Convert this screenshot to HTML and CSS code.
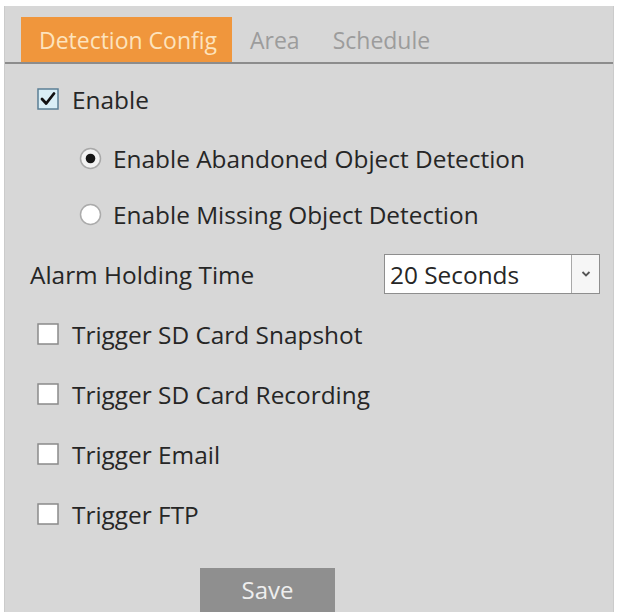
FILE: index.html
```html
<!DOCTYPE html>
<html lang="en">
<head>
<meta charset="utf-8">
<title>Detection Config</title>
<link rel="stylesheet" href="styles.css">
</head>
<body>
<div class="panel">
  <div class="tabs">
    <div class="tab active">Detection Config</div>
    <div class="tab">Area</div>
    <div class="tab">Schedule</div>
  </div>
  <div class="form">
    <div class="row check-row">
      <svg class="box" width="22" height="22" viewBox="0 0 22 22"><rect x="1" y="1" width="20" height="20" fill="#d9eef6" stroke="#5b7f95" stroke-width="1.5"/><path d="M5 11 L9.2 15.5 L17 5.5" fill="none" stroke="#111" stroke-width="2.8" stroke-linecap="round" stroke-linejoin="round"/></svg>
      <span>Enable</span>
    </div>
    <div class="row radio-row">
      <svg class="radio" width="23" height="23" viewBox="0 0 23 23"><circle cx="11.5" cy="11.5" r="10" fill="#f2f2f2" stroke="#a8a8a8" stroke-width="1.5"/><circle cx="11.5" cy="11.5" r="4.8" fill="#161616"/></svg>
      <span>Enable Abandoned Object Detection</span>
    </div>
    <div class="row radio-row tight">
      <svg class="radio" width="23" height="23" viewBox="0 0 23 23"><circle cx="11.5" cy="11.5" r="10" fill="#ffffff" stroke="#ababab" stroke-width="1.5"/></svg>
      <span>Enable Missing Object Detection</span>
    </div>
    <div class="row field-row">
      <span class="label">Alarm Holding Time</span>
      <div class="select">
        <span class="value">20 Seconds</span>
        <span class="drop"><svg width="10" height="8" viewBox="0 0 10 8"><path d="M1.5 2 L5 5.5 L8.5 2" fill="none" stroke="#555" stroke-width="1.8"/></svg></span>
      </div>
    </div>
    <div class="row check-row trig">
      <svg class="box" width="22" height="22" viewBox="0 0 22 22"><rect x="1" y="1" width="20" height="20" fill="#ffffff" stroke="#8a8a8a" stroke-width="1.5"/></svg>
      <span>Trigger SD Card Snapshot</span>
    </div>
    <div class="row check-row trig">
      <svg class="box" width="22" height="22" viewBox="0 0 22 22"><rect x="1" y="1" width="20" height="20" fill="#ffffff" stroke="#8a8a8a" stroke-width="1.5"/></svg>
      <span>Trigger SD Card Recording</span>
    </div>
    <div class="row check-row trig">
      <svg class="box" width="22" height="22" viewBox="0 0 22 22"><rect x="1" y="1" width="20" height="20" fill="#ffffff" stroke="#8a8a8a" stroke-width="1.5"/></svg>
      <span>Trigger Email</span>
    </div>
    <div class="row check-row trig">
      <svg class="box" width="22" height="22" viewBox="0 0 22 22"><rect x="1" y="1" width="20" height="20" fill="#ffffff" stroke="#8a8a8a" stroke-width="1.5"/></svg>
      <span>Trigger FTP</span>
    </div>
    <div class="actions">
      <button class="save" type="button">Save</button>
    </div>
  </div>
</div>
</body>
</html>
```
FILE: styles.css
```css
html, body {
  margin: 0;
  padding: 0;
  background: #ffffff;
}
body {
  font-family: "Open Sans", "Noto Sans", "Liberation Sans", sans-serif;
  color: #262626;
}
.panel {
  margin: 6px 4px 0 4px;
  width: 610px;
  height: 606px;
  background: #d7d7d7;
  box-sizing: border-box;
  border-left: 1px solid #cbcbcb;
  border-right: 1px solid #cbcbcb;
  overflow: hidden;
}
.tabs {
  display: flex;
  padding: 11px 0 0 16px;
  border-bottom: 2px solid #8c8c8c;
}
.tab {
  height: 45px;
  display: flex;
  align-items: center;
  padding: 0 15px 0 18px;
  font-size: 23px;
  color: #9c9c9c;
}
.tab.active {
  width: 211px;
  box-sizing: border-box;
  justify-content: center;
  padding: 0 0 0 3px;
  background: #f0963c;
  color: #fde3bd;
}
.form {
  display: flex;
  flex-direction: column;
  gap: 19px;
  padding: 15px 0 0 25px;
}
.row {
  height: 40px;
  display: flex;
  align-items: center;
  font-size: 24.4px;
}
.row.tight {
  margin-top: -3px;
}
.check-row {
  padding-left: 7px;
}
.check-row.trig {
  margin-top: 1px;
}
.check-row .box {
  margin-right: 13px;
  flex: none;
}
.radio-row {
  padding-left: 49px;
}
.radio-row .radio {
  margin-right: 11px;
  flex: none;
}
.field-row {
  margin-top: 1px;
}
.field-row .label {
  width: 354px;
}
.select {
  width: 216px;
  height: 40px;
  box-sizing: border-box;
  background: #ffffff;
  border: 1px solid #8e8e8e;
  display: flex;
  align-items: center;
}
.select .value {
  flex: 1;
  padding-left: 5px;
}
.select .drop {
  width: 27px;
  height: 100%;
  border-left: 1px solid #a9a9a9;
  background: #f6f6f6;
  display: flex;
  align-items: center;
  justify-content: center;
}
.actions {
  padding: 15px 0 0 170px;
}
.save {
  width: 135px;
  height: 46px;
  border: none;
  background: #8f8f8f;
  color: #eeeeee;
  font-family: "Open Sans", "Noto Sans", "Liberation Sans", sans-serif;
  font-size: 24px;
  padding: 0 0 4px 0;
}
```
